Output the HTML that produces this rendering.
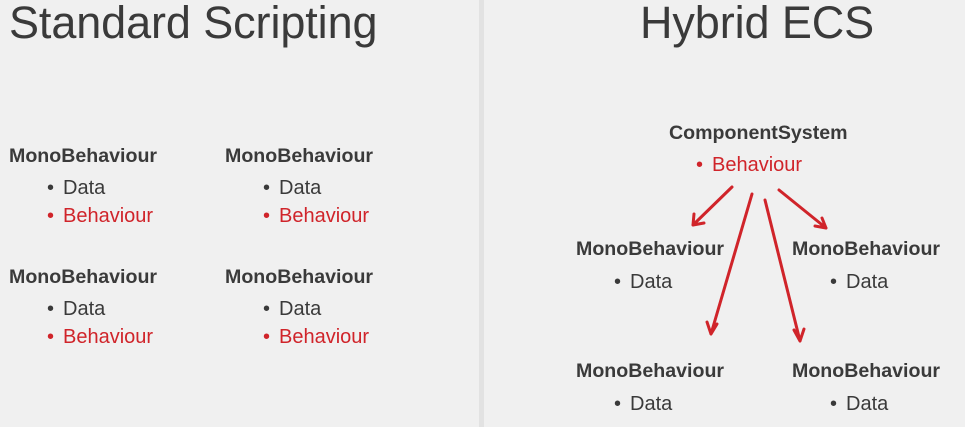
<!DOCTYPE html>
<html><head><style>
body{margin:0;width:965px;height:427px;background:#f0f0f0;overflow:hidden;position:relative;font-family:"Liberation Sans",sans-serif;color:#3a3a3a}
div.t{position:absolute;white-space:nowrap}
.h{font-size:45px;top:-3px;letter-spacing:-0.1px}
.b{font-size:19.6px;font-weight:bold}
.d{font-size:20px}
.d span{display:inline-block;width:16px}
.r{color:#d0242a}
.bar{position:absolute;left:479px;top:0;width:5px;height:427px;background:#e2e2e2}
</style></head><body>
<div class="bar"></div>
<div class="t h" style="left:9px">Standard Scripting</div>
<div class="t h" style="left:640px">Hybrid ECS</div>

<div class="t b" style="left:9px;top:145px">MonoBehaviour</div>
<div class="t d" style="left:47px;top:177px"><span>•</span>Data</div>
<div class="t d r" style="left:47px;top:205px"><span>•</span>Behaviour</div>
<div class="t b" style="left:225px;top:145px">MonoBehaviour</div>
<div class="t d" style="left:263px;top:177px"><span>•</span>Data</div>
<div class="t d r" style="left:263px;top:205px"><span>•</span>Behaviour</div>

<div class="t b" style="left:9px;top:266px">MonoBehaviour</div>
<div class="t d" style="left:47px;top:298px"><span>•</span>Data</div>
<div class="t d r" style="left:47px;top:326px"><span>•</span>Behaviour</div>
<div class="t b" style="left:225px;top:266px">MonoBehaviour</div>
<div class="t d" style="left:263px;top:298px"><span>•</span>Data</div>
<div class="t d r" style="left:263px;top:326px"><span>•</span>Behaviour</div>

<div class="t b" style="left:669px;top:122px">ComponentSystem</div>
<div class="t d r" style="left:696px;top:154px"><span>•</span>Behaviour</div>

<div class="t b" style="left:576px;top:238px">MonoBehaviour</div>
<div class="t d" style="left:614px;top:271px"><span>•</span>Data</div>
<div class="t b" style="left:792px;top:238px">MonoBehaviour</div>
<div class="t d" style="left:830px;top:271px"><span>•</span>Data</div>
<div class="t b" style="left:576px;top:360px">MonoBehaviour</div>
<div class="t d" style="left:614px;top:393px"><span>•</span>Data</div>
<div class="t b" style="left:792px;top:360px">MonoBehaviour</div>
<div class="t d" style="left:830px;top:393px"><span>•</span>Data</div>

<svg width="965" height="427" style="position:absolute;left:0;top:0" fill="none" stroke="#d0242a" stroke-width="3" stroke-linecap="round">
<path d="M732 187L693 225M693 225L694 214M693 225L704 223"/>
<path d="M752 194L711 334M711 334L707 322M711 334L717 324"/>
<path d="M765 200L800 341M800 341L794 330M800 341L804 329"/>
<path d="M779 190L826 228M826 228L815 226M826 228L822 218"/>
</svg>
</body></html>
